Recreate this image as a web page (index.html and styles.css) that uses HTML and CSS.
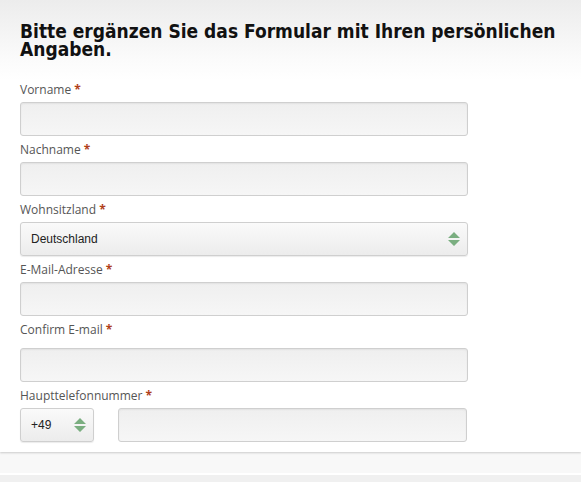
FILE: index.html
```html
<!DOCTYPE html>
<html lang="de">
<head>
<meta charset="utf-8">
<link rel="stylesheet" href="styles.css">
</head>
<body>
<div class="panel">
  <h1 class="title">Bitte ergänzen Sie das Formular mit Ihren persönlichen Angaben.</h1>
  <form class="form">
    <div class="field">
      <label class="label">Vorname <span class="req">*</span></label>
      <div class="input"></div>
    </div>
    <div class="field">
      <label class="label">Nachname <span class="req">*</span></label>
      <div class="input"></div>
    </div>
    <div class="field">
      <label class="label">Wohnsitzland <span class="req">*</span></label>
      <div class="input select"><span class="value">Deutschland</span><svg class="arrows" width="12" height="14" viewBox="0 0 12 14"><path d="M6 0 L12 6 H0 Z M0 8 H12 L6 14 Z" fill="#7aae80"/></svg></div>
    </div>
    <div class="field">
      <label class="label">E-Mail-Adresse <span class="req">*</span></label>
      <div class="input"></div>
    </div>
    <div class="field confirm">
      <label class="label">Confirm E-mail <span class="req">*</span></label>
      <div class="input"></div>
    </div>
    <div class="field">
      <label class="label">Haupttelefonnummer <span class="req">*</span></label>
      <div class="phone">
        <div class="input select code"><span class="value">+49</span><svg class="arrows" width="12" height="14" viewBox="0 0 12 14"><path d="M6 0 L12 6 H0 Z M0 8 H12 L6 14 Z" fill="#7aae80"/></svg></div>
        <div class="input number"></div>
      </div>
    </div>
  </form>
</div>
<div class="strip"></div>
<div class="bar"></div>
</body>
</html>
```
FILE: styles.css
```css
html, body {
  margin: 0;
  padding: 0;
  background: #ffffff;
}
body {
  width: 581px;
  height: 482px;
  overflow: hidden;
}
.panel {
  background: linear-gradient(#ececec 0px, #fbfbfb 60px, #ffffff 80px);
  padding: 22px 20px 0 20px;
  height: 430px;
  box-shadow: 0 1px 2px rgba(0,0,0,0.18);
  position: relative;
}
.title {
  margin: 0 0 25px 0;
  font-family: "DejaVu Sans Condensed", "DejaVu Sans", sans-serif;
  font-stretch: condensed;
  font-weight: bold;
  font-size: 19px;
  line-height: 18px;
  color: #111;
  width: 545px;
}
.form {
  display: flex;
  flex-direction: column;
}
.field {
  display: flex;
  flex-direction: column;
  margin-bottom: 7px;
}
.field.confirm .label {
  margin-bottom: 11px;
}
.label {
  font-family: "Open Sans", sans-serif;
  font-size: 12px;
  line-height: 14px;
  color: #555;
  margin-bottom: 5px;
}
.req {
  color: #b0401a;
  font-weight: bold;
}
.input {
  box-sizing: border-box;
  width: 448px;
  height: 34px;
  border: 1px solid #cfcfcf;
  border-radius: 3px;
  background: linear-gradient(#efefef, #f6f6f6);
  box-shadow: inset 0 1px 2px rgba(0,0,0,0.06);
}
.select {
  display: flex;
  align-items: center;
  justify-content: space-between;
  padding: 0 7px 0 10px;
  background: linear-gradient(#fafafa, #ececec);
  box-shadow: 0 1px 1px rgba(0,0,0,0.08);
}
.value {
  font-family: "Liberation Sans", Arial, sans-serif;
  font-size: 12px;
  color: #222;
}
.phone {
  display: flex;
  gap: 24px;
}
.code {
  width: 74px;
}
.number {
  width: 349px;
}
.strip {
  height: 21px;
  background: #f8f8f8;
  border-bottom: 2px solid #ffffff;
}
.bar {
  height: 30px;
  background: #f0f0f0;
}
```
